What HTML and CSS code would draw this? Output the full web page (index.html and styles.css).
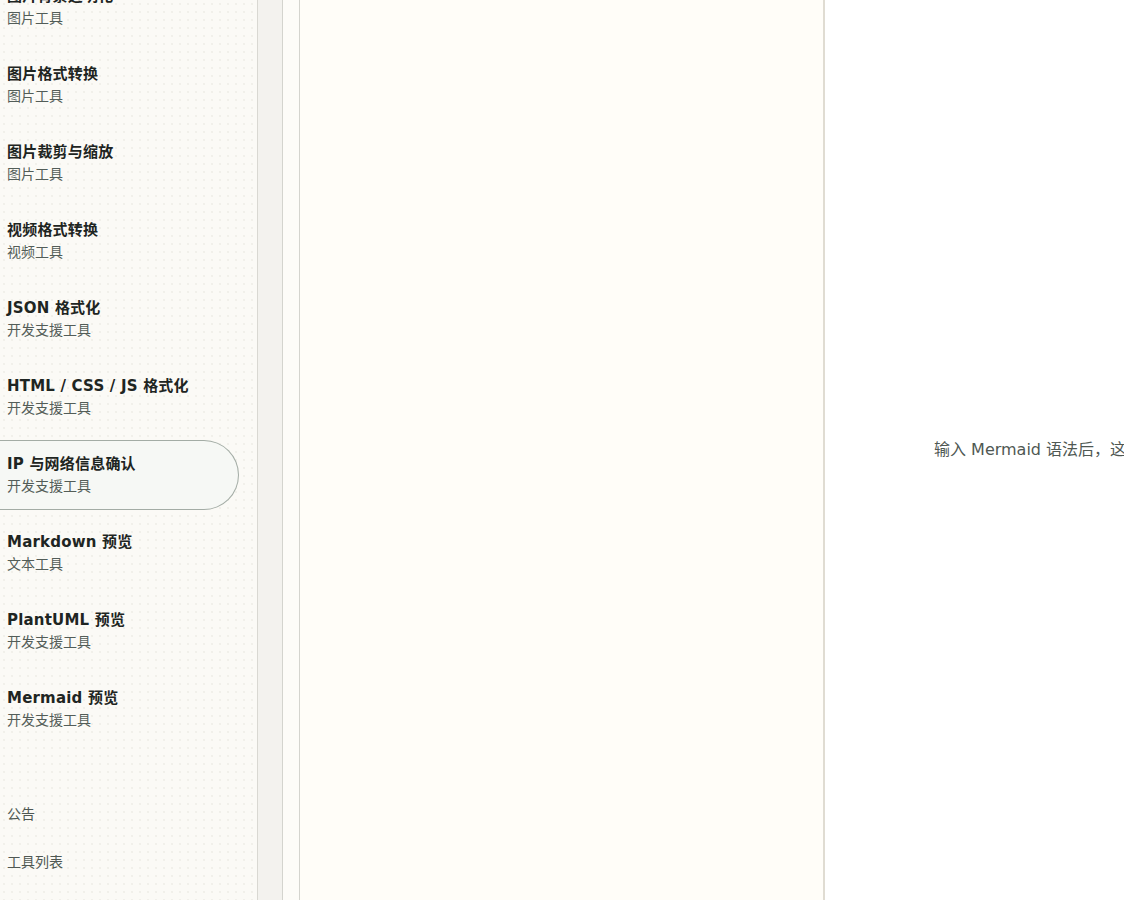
FILE: index.html
```html
<!DOCTYPE html>
<html lang="zh">
<head>
<meta charset="utf-8">
<title>Mermaid 预览</title>
<link rel="stylesheet" href="styles.css">
</head>
<body>
<div class="app">
  <aside class="sidebar">
    <ul class="tools">
      <li class="tool"><div class="t">图片背景透明化</div><div class="s">图片工具</div></li>
      <li class="tool"><div class="t">图片格式转换</div><div class="s">图片工具</div></li>
      <li class="tool"><div class="t">图片裁剪与缩放</div><div class="s">图片工具</div></li>
      <li class="tool"><div class="t">视频格式转换</div><div class="s">视频工具</div></li>
      <li class="tool"><div class="t">JSON 格式化</div><div class="s">开发支援工具</div></li>
      <li class="tool"><div class="t">HTML / CSS / JS 格式化</div><div class="s">开发支援工具</div></li>
      <li class="tool active"><div class="t">IP 与网络信息确认</div><div class="s">开发支援工具</div></li>
      <li class="tool"><div class="t">Markdown 预览</div><div class="s">文本工具</div></li>
      <li class="tool"><div class="t">PlantUML 预览</div><div class="s">开发支援工具</div></li>
      <li class="tool"><div class="t">Mermaid 预览</div><div class="s">开发支援工具</div></li>
    </ul>
    <nav class="links">
      <a class="link">公告</a>
      <a class="link">工具列表</a>
    </nav>
  </aside>
  <div class="rail"></div>
  <div class="gutter"></div>
  <section class="editor"></section>
  <section class="preview">
    <p class="hint">输入 Mermaid 语法后，这里将显示预览图。</p>
  </section>
</div>
</body>
</html>
```

FILE: styles.css
```css
* { box-sizing: border-box; }
html, body { margin: 0; padding: 0; height: 100%; overflow: hidden; }
body {
  font-family: "DejaVu Sans", "Noto Sans CJK SC", sans-serif;
  background: #ffffff;
  color: #1f2623;
}
.app { display: flex; height: 900px; width: 1124px; }
.sidebar {
  width: 258px;
  flex: none;
  border-right: 1px solid #d9d8d2;
  background-color: #fbfaf6;
  background-image: radial-gradient(circle, #f1f0ea 0.7px, transparent 1px);
  background-size: 8px 8px;
  overflow: hidden;
  display: flex;
  flex-direction: column;
}
.tools {
  list-style: none;
  margin: -28px 0 0 0;
  padding: 0;
  display: flex;
  flex-direction: column;
  gap: 8px;
}
.tool {
  margin-left: -30px;
  width: 269px;
  padding: 13px 0 14px 37px;
  height: 70px;
  border: 1px solid transparent;
  border-left: none;
  border-radius: 0 35px 35px 0;
}
.tool.active {
  background: #f6f8f5;
  border-color: #a3aca5;
}
.t {
  font-size: 15px;
  font-weight: 700;
  line-height: 20px;
  color: #1e2522;
  white-space: nowrap;
  letter-spacing: 0.2px;
}
.s {
  margin-top: 2px;
  font-family: "Noto Sans CJK SC", sans-serif;
  font-size: 14px;
  line-height: 18px;
  color: #535d58;
}
.links {
  margin-top: 60px;
  display: flex;
  flex-direction: column;
  gap: 30px;
  padding-left: 7px;
}
.link {
  font-family: "Noto Sans CJK SC", sans-serif;
  font-size: 14px;
  line-height: 18px;
  color: #4f5853;
}
.rail {
  width: 25px;
  flex: none;
  background: #f3f2ee;
  border-right: 1px solid #d4d4ce;
}
.gutter {
  width: 17px;
  flex: none;
  background: #fdfcf8;
  border-right: 1px solid #d4d4ce;
}
.editor {
  width: 525px;
  flex: none;
  background: #fffdf8;
  border-right: 2px solid #e0dcd2;
}
.preview {
  flex: 1;
  background: #ffffff;
  display: flex;
  align-items: center;
  overflow: hidden;
  padding-left: 109px;
}
.hint {
  margin: 0;
  font-size: 16px;
  line-height: 20px;
  color: #4f5853;
  white-space: nowrap;
}
```
